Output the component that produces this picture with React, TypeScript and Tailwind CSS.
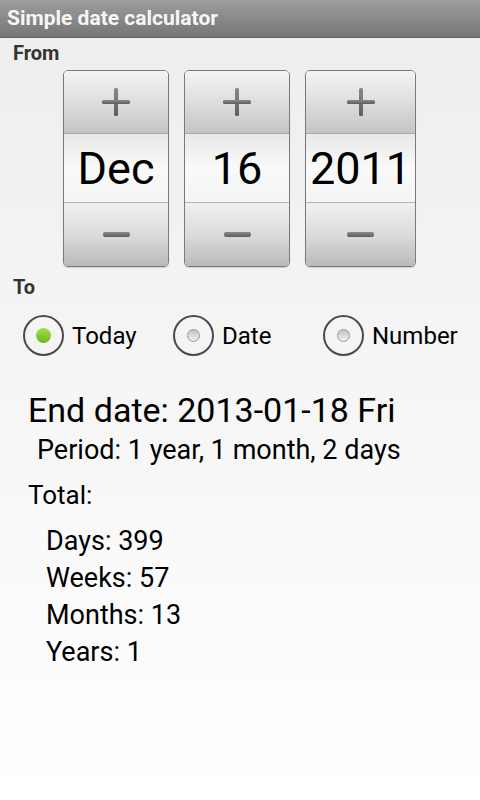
import React from 'react'

const font = { fontFamily: 'Roboto, "Noto Sans", sans-serif' }

function Plus() {
    return (
        <svg width="30" height="30" viewBox="0 0 30 30">
            <defs>
                <linearGradient id="pg" x1="0" y1="0" x2="0" y2="1">
                    <stop offset="0" stopColor="#8a8a8a" />
                    <stop offset="1" stopColor="#5c5c5c" />
                </linearGradient>
            </defs>
            <rect x="13" y="1" width="4" height="28" rx="1.5" fill="url(#pg)" />
            <rect x="1" y="13" width="28" height="4" rx="1.5" fill="url(#pg)" />
        </svg>
    )
}

function Minus() {
    return <div className="w-[27px] h-[5px] rounded-[2px] bg-gradient-to-b from-[#8a8a8a] to-[#5e5e5e]" />
}

function Picker({ value, width }: { value: string; width: string }) {
    return (
        <div className={`${width} h-[197px] flex flex-col rounded-[5px] border border-[#7a7a7a] overflow-hidden shadow-[0_1px_1px_rgba(0,0,0,0.15)]`}>
            <div className="h-[63px] flex items-center justify-center bg-gradient-to-b from-[#f4f4f4] via-[#dedede] to-[#c4c4c4] border-b border-[#a8a8a8]">
                <Plus />
            </div>
            <div className="h-[69px] flex items-center justify-center bg-gradient-to-b from-[#e8e8e8] via-[#fafafa] to-[#f4f4f4] border-b border-[#b4b4b4]">
                <span className="text-[45px] text-black leading-none">{value}</span>
            </div>
            <div className="flex-1 flex items-center justify-center bg-gradient-to-b from-[#f0f0f0] via-[#dcdcdc] to-[#bababa]">
                <Minus />
            </div>
        </div>
    )
}

function Radio({ label, checked, gap }: { label: string; checked?: boolean; gap: string }) {
    return (
        <div className={`flex items-center ${gap}`}>
            <div className="w-[41px] h-[41px] rounded-full border-2 border-[#4a4a4a] bg-[#f4f4f4] flex items-center justify-center">
                {checked ? (
                    <div className="w-[15px] h-[15px] rounded-full bg-gradient-to-b from-[#a6e04a] to-[#6cb51c]" />
                ) : (
                    <div className="w-[13px] h-[13px] rounded-full border border-[#9a9a9a] bg-gradient-to-b from-[#c4c4c4] to-[#f0f0f0]" />
                )}
            </div>
            <span className="ml-[8px] text-[24px] text-black">{label}</span>
        </div>
    )
}

export default function App() {
    return (
        <div className="w-[480px] h-[800px] flex flex-col bg-gradient-to-b from-[#ededed] to-white" style={font}>
            <div className="h-[38px] flex items-center px-[7px] bg-gradient-to-b from-[#9d9d9d] to-[#767676] border-b border-[#666]">
                <span className="text-[21px] font-bold text-[#f6f6f6]">Simple date calculator</span>
            </div>
            <div className="px-[13px] pt-[3px] text-[20px] font-bold text-[#333] leading-[24px]">From</div>
            <div className="flex gap-[15px] pl-[63px] mt-[5px]">
                <Picker value="Dec" width="w-[106px]" />
                <Picker value="16" width="w-[106px]" />
                <Picker value="2011" width="w-[111px]" />
            </div>
            <div className="px-[13px] mt-[8px] text-[20px] font-bold text-[#333] leading-[24px]">To</div>
            <div className="flex pl-[23px] mt-[16px]">
                <Radio label="Today" checked gap="w-[150px]" />
                <Radio label="Date" gap="w-[150px]" />
                <Radio label="Number" gap="" />
            </div>
            <div className="pl-[28px] mt-[34px] text-[34px] text-black leading-[40px]">End date: 2013-01-18 Fri</div>
            <div className="pl-[37px] text-[27px] text-black leading-[40px]">Period: 1 year, 1 month, 2 days</div>
            <div className="pl-[28px] mt-[7px] text-[26px] text-black leading-[36px]">Total:</div>
            <div className="pl-[46px] mt-[10px] flex flex-col text-[27px] text-black leading-[37px]">
                <span>Days: 399</span>
                <span>Weeks: 57</span>
                <span>Months: 13</span>
                <span>Years: 1</span>
            </div>
        </div>
    )
}
